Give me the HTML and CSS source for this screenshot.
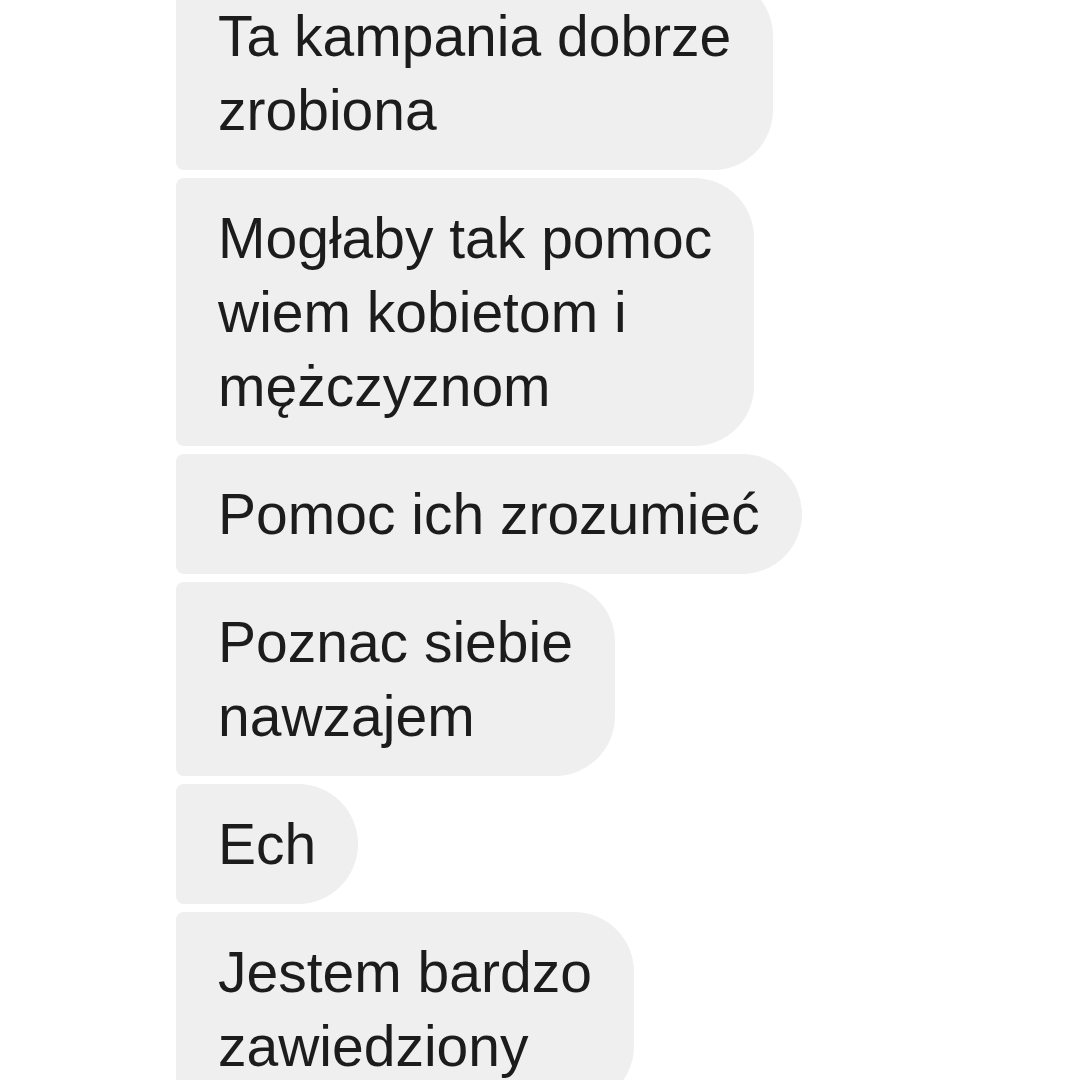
FILE: index.html
```html
<!DOCTYPE html>
<html lang="pl">
<head>
<meta charset="utf-8">
<link rel="stylesheet" href="styles.css">
<title>Czat</title>
</head>
<body>
<div class="thread">
  <div class="bubble">Ta kampania dobrze<br>zrobiona</div>
  <div class="bubble">Mogłaby tak pomoc<br>wiem kobietom i<br>mężczyznom</div>
  <div class="bubble">Pomoc ich zrozumieć</div>
  <div class="bubble">Poznac siebie<br>nawzajem</div>
  <div class="bubble">Ech</div>
  <div class="bubble">Jestem bardzo<br>zawiedziony</div>
</div>
</body>
</html>
```
FILE: styles.css
```css
html, body {
  margin: 0;
  padding: 0;
  background: #ffffff;
  width: 1080px;
  height: 1080px;
  overflow: hidden;
}
.thread {
  display: flex;
  flex-direction: column;
  align-items: flex-start;
  gap: 8px;
  margin-top: -24px;
  padding-left: 176px;
}
.bubble {
  background: #efefef;
  color: #1c1c1c;
  font-family: "Liberation Sans", Arial, sans-serif;
  font-size: 57px;
  line-height: 74px;
  padding: 23px 42px;
  border-radius: 8px 60px 60px 8px;
  white-space: nowrap;
}
```
